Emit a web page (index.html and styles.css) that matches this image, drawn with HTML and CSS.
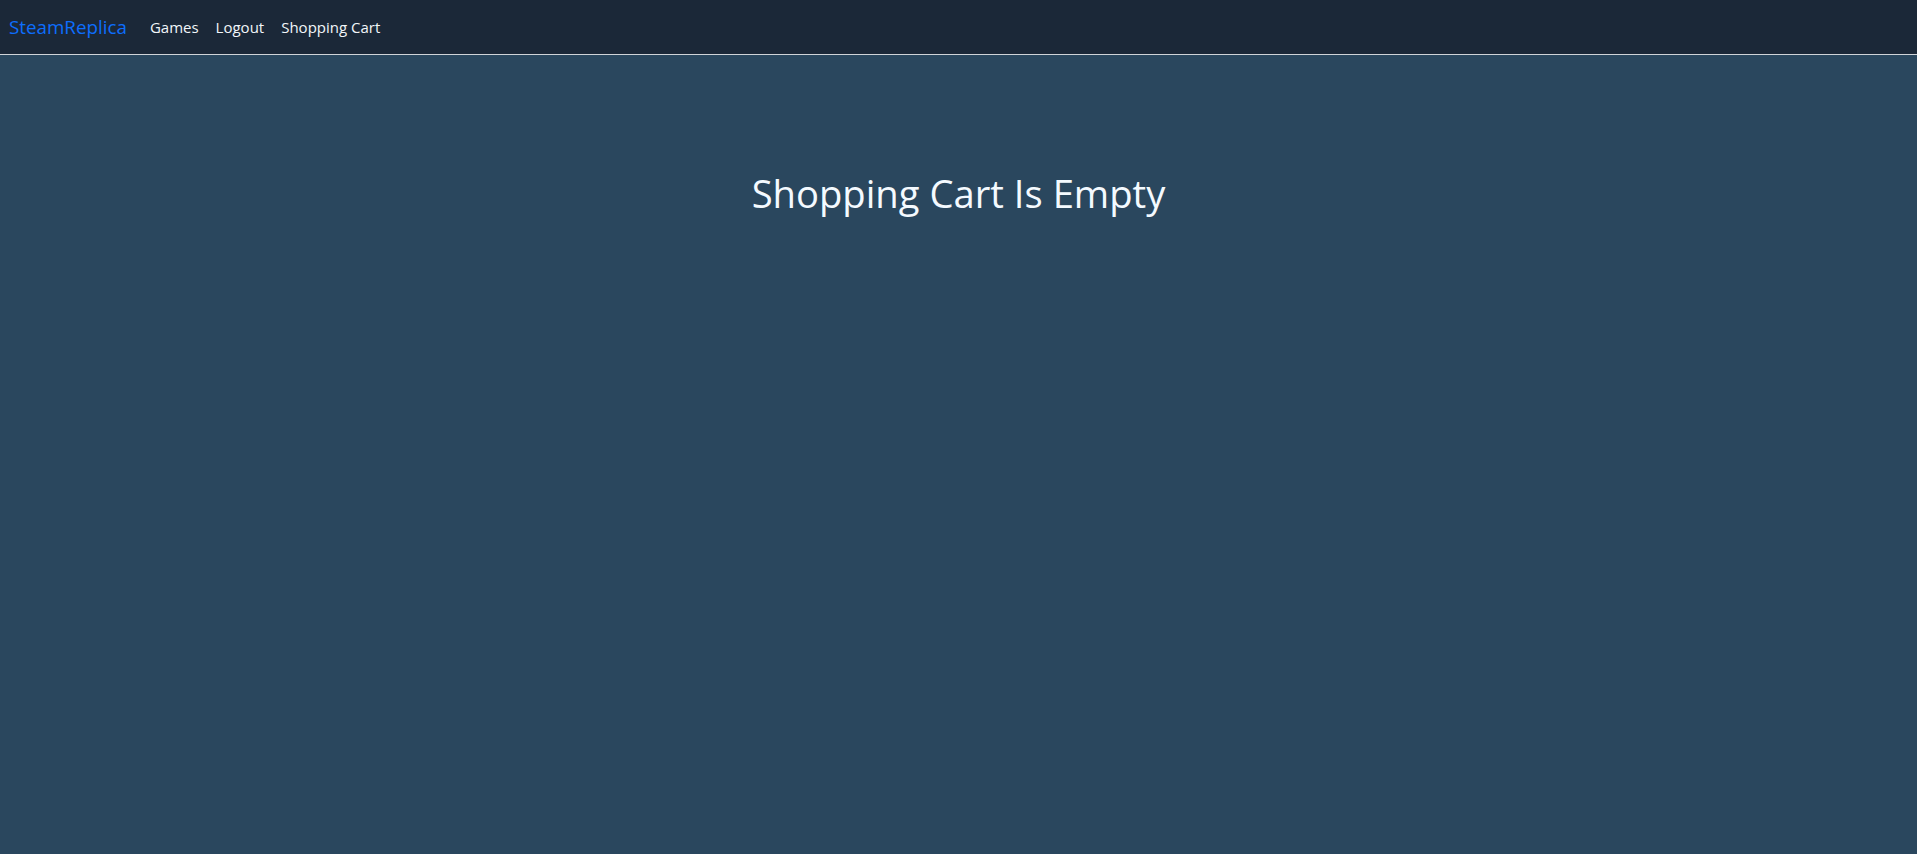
FILE: index.html
```html
<!DOCTYPE html>
<html lang="en">
<head>
<meta charset="utf-8">
<title>SteamReplica</title>
<link rel="stylesheet" href="styles.css">
</head>
<body>
<header class="navbar">
  <a class="brand" href="#">SteamReplica</a>
  <nav class="nav">
    <a class="nav-link" href="#">Games</a>
    <a class="nav-link" href="#">Logout</a>
    <a class="nav-link" href="#">Shopping Cart</a>
  </nav>
</header>
<main class="content">
  <h1 class="title">Shopping Cart Is Empty</h1>
</main>
</body>
</html>
```
FILE: styles.css
```css
html, body {
  margin: 0;
  padding: 0;
  height: 100%;
}
body {
  background: #2a475e;
  font-family: "Open Sans", "Noto Sans", sans-serif;
  color: #fff;
}
.navbar {
  display: flex;
  align-items: center;
  height: 54px;
  padding: 0 9px;
  background: #1b2838;
  border-bottom: 1px solid #d0d4d8;
}
.brand {
  color: #0d6efd;
  font-size: 18.8px;
  text-decoration: none;
  margin-right: 23px;
}
.nav {
  display: flex;
  gap: 17px;
}
.nav-link {
  color: #f2f6fa;
  font-size: 15px;
  text-decoration: none;
}
.content {
  padding-top: 114px;
  text-align: center;
}
.title {
  margin: 0;
  font-weight: 400;
  font-size: 38.2px;
  line-height: 48px;
  color: #f4faff;
}
```
